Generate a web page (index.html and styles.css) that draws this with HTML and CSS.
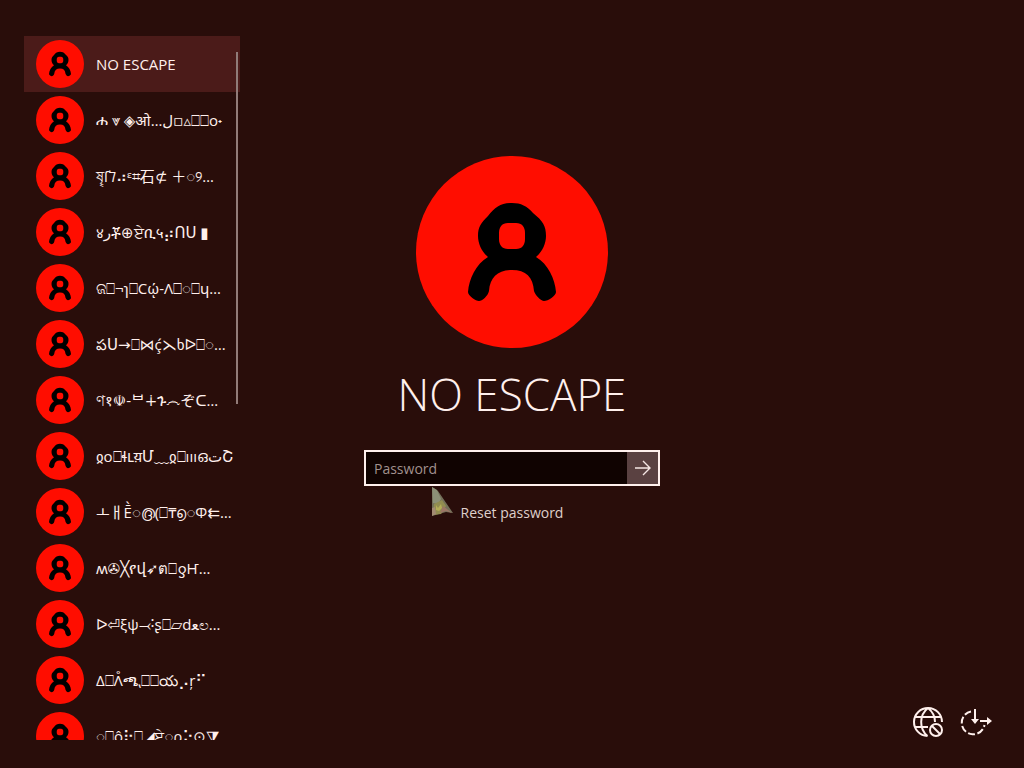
FILE: index.html
```html
<!DOCTYPE html>
<html lang="en">
<head>
  <meta charset="UTF-8" />
  <title>Sign in</title>
  <meta name="viewport" content="width=device-width, initial-scale=1.0" />
  <link rel="stylesheet" href="styles.css">
</head>
<body>
  <!-- shared shapes -->
  <svg class="defs" aria-hidden="true">
    <symbol id="avatar" viewBox="0 0 192 192">
      <circle cx="96" cy="96" r="96" fill="#ff0d00" />
      <path fill="#000" fill-rule="evenodd" d="M96 47C105 47 111 50 117 57C127 65 130 70 130 80C130 88 126 96 120 101C132 108 139 123 140 136C140 140 132 145 128 145C125 145 119 139 118 135C117 121 110 114 96 114C82 114 74 121 73 135C72 140 66 145 63 145C60 145 52 140 52 136C53 123 60 108 72 101C66 96 62 88 62 80C62 71 65 67 72 60C79 51 85 47 96 47ZM92 67C86 67 83 71 83 77V83C83 89 86 93 92 93H100C106 93 109 89 109 83V77C109 71 106 67 100 67Z" />
    </symbol>
  </svg>

  <div class="screen">
    <nav class="users" aria-label="Users">
      <ul class="user-list">
        <li><button class="user active" type="button"><svg class="user-pic"><use href="#avatar" /></svg><span class="user-name">NO ESCAPE</span></button></li>
        <li><button class="user" type="button"><svg class="user-pic"><use href="#avatar" /></svg><span class="user-name">ሐ ⩔ ◈ओ…ل▫▵⎕⎕o˖</span></button></li>
        <li><button class="user" type="button"><svg class="user-pic"><use href="#avatar" /></svg><span class="user-name">ষৄſל⠴ᵋ⌗石⊄ ＋◌୨…</span></button></li>
        <li><button class="user" type="button"><svg class="user-pic"><use href="#avatar" /></svg><span class="user-name">४رቾ⊕ਏቢ५⡴ՈՍ ▮</span></button></li>
        <li><button class="user" type="button"><svg class="user-pic"><use href="#avatar" /></svg><span class="user-name">ଜ⎕¬ɿ⎕Cῴ-Λ⎕◌⎕ɥ…</span></button></li>
        <li><button class="user" type="button"><svg class="user-pic"><use href="#avatar" /></svg><span class="user-name">పՍ→⎕⋈ḉ⋋ხᐅ⎕◌…</span></button></li>
        <li><button class="user" type="button"><svg class="user-pic"><use href="#avatar" /></svg><span class="user-name">ণ१☫-ᄇ∔ጉ෴ぞᑕ…</span></button></li>
        <li><button class="user" type="button"><svg class="user-pic"><use href="#avatar" /></svg><span class="user-name">ჲo⎕ɬւय़Մ﹏ჲ⎕ıııഒتՇ</span></button></li>
        <li><button class="user" type="button"><svg class="user-pic"><use href="#avatar" /></svg><span class="user-name">ￌￃḔ◌൫(⎕₸൭◌Φ⇇…</span></button></li>
        <li><button class="user" type="button"><svg class="user-pic"><use href="#avatar" /></svg><span class="user-name">ʍ✇╳የվ➶ต⎕ƍҤ…</span></button></li>
        <li><button class="user" type="button"><svg class="user-pic"><use href="#avatar" /></svg><span class="user-name">ᐅ⏎ξѱ⤙˸ʂ⎕▱dﻌಲ…</span></button></li>
        <li><button class="user" type="button"><svg class="user-pic"><use href="#avatar" /></svg><span class="user-name">Δ⎕Λ̊ጫ⹁⎕⎕య⡠ŗ⠋</span></button></li>
        <li><button class="user" type="button"><svg class="user-pic"><use href="#avatar" /></svg><span class="user-name">◌⎕ô⡗⎕◢ਏ◌ρ⠕⊙⧩</span></button></li>
      </ul>
      <div class="scroll-thumb"></div>
    </nav>

    <main class="login">
      <svg class="login-pic" aria-hidden="true"><use href="#avatar" /></svg>
      <h1 class="login-name">NO ESCAPE</h1>
      <form class="password-form">
        <input class="password-input" type="password" placeholder="Password" aria-label="Password" />
        <button class="submit-btn" type="submit" aria-label="Submit">
          <svg viewBox="0 0 18 18" width="18" height="18"><path d="M1 9H16M9 2L16 9L9 16" fill="none" stroke="#f5e6e4" stroke-width="1.4" /></svg>
        </button>
      </form>
      <a class="reset-link" href="#">Reset password</a>

      <!-- mouse pointer -->
      <svg class="pointer" viewBox="0 0 22 31" width="22" height="31" aria-hidden="true">
        <path d="M1 1L7 5L22 27L15 26L8 28L1 30Z" fill="#74705a" />
        <path d="M1 1L6 4L10 13L7 18L2 17Z" fill="#8c9077" />
        <path d="M3 18L11 14L15 20L10 28L2 29Z" fill="#918c50" />
        <path d="M12 20L21 27L15 25L9 27Z" fill="#9c7565" />
        <path d="M5 19L7 22L10 18L11 22L8 25L5 24Z" fill="#b4ac57" />
        <path d="M1 22L4 21L5 28L1 30Z" fill="#a28a72" />
      </svg>
    </main>

    <div class="tools">
      <button class="tool-btn" type="button" aria-label="Network">
        <svg viewBox="0 0 32 32" width="32" height="32" fill="none" stroke="#fff0ed" stroke-width="2">
          <path d="M15.500 30A14 14 0 1 1 30 16M3.500 11H28.500M3.500 21H16M16 2C7 9 7 23 15.500 30M16 2C21 6 23 10 23 16" />
          <circle cx="24" cy="24" r="6" />
          <path d="M20 20L28 28" />
        </svg>
      </button>
      <button class="tool-btn" type="button" aria-label="Ease of access">
        <svg viewBox="0 0 32 32" width="32" height="32" fill="none" stroke="#fff0ed" stroke-width="2">
          <path d="M11 5.500A11.500 11.500 0 1 0 24.500 19" stroke-dasharray="7 2.500" />
          <path d="M15 3V14M20 15H28" />
          <path d="M11 13H19L15 18ZM27 11L32 15L27 19Z" fill="#fff0ed" stroke="none" />
        </svg>
      </button>
    </div>
  </div>
</body>
</html>
```
FILE: styles.css
```css
* {
  box-sizing: border-box;
}

body {
  margin: 0;
  background: #290d0a;
  color: #fff0ed;
  font-family: "Open Sans", "Noto Sans", "DejaVu Sans", "Noto Sans CJK SC", sans-serif;
  font-size: 14px;
  overflow: hidden;
}

button {
  border: none;
  padding: 0;
  background: none;
  color: inherit;
  font: inherit;
  cursor: pointer;
}

.defs {
  position: absolute;
  width: 0;
  height: 0;
}

.screen {
  display: grid;
  grid-template-columns: 1fr auto 1fr;
  height: 100vh;
}

/* user list */
.users {
  position: relative;
  width: 216px;
  margin: 36px 0 28px 24px;
  overflow: hidden;
}

.user-list {
  list-style: none;
  margin: 0;
  padding: 0;
}

.user {
  display: flex;
  align-items: center;
  gap: 12px;
  width: 100%;
  height: 56px;
  padding: 0 12px;
  text-align: left;
}

.user.active {
  background: #4b1b19;
}

.user-pic {
  flex: none;
  width: 48px;
  height: 48px;
}

.user-name {
  font-size: 15px;
  line-height: 20px;
  white-space: nowrap;
}

.scroll-thumb {
  position: absolute;
  top: 16px;
  right: 2px;
  width: 2px;
  height: 352px;
  background: #917b78;
}

/* sign in */
.login {
  position: relative;
  display: flex;
  flex-direction: column;
  align-items: center;
  align-self: start;
  width: 296px;
  padding-top: 156px;
}

.login-pic {
  width: 192px;
  height: 192px;
}

.login-name {
  margin: 14px 0 24px;
  font-size: 44px;
  font-weight: 300;
  line-height: 64px;
  white-space: nowrap;
}

.password-form {
  display: flex;
  width: 100%;
  height: 36px;
  border: 2px solid #fff0ed;
}

.password-input {
  flex: 1;
  min-width: 0;
  border: none;
  outline: none;
  padding: 0 8px;
  background: #100301;
  color: #fff0ed;
  font: inherit;
}

.password-input::placeholder {
  color: #a1918e;
  opacity: 1;
}

.submit-btn {
  display: flex;
  align-items: center;
  justify-content: center;
  width: 31px;
  background: #5a4141;
}

.reset-link {
  margin-top: 17px;
  color: #dfcfcb;
  line-height: 20px;
  text-decoration: none;
}

.pointer {
  position: absolute;
  left: 67px;
  top: 486px;
}

/* bottom right buttons */
.tools {
  display: flex;
  justify-content: flex-end;
  align-self: end;
  gap: 16px;
  padding: 0 32px 30px 0;
}

.tool-btn {
  width: 32px;
  height: 32px;
}
```
